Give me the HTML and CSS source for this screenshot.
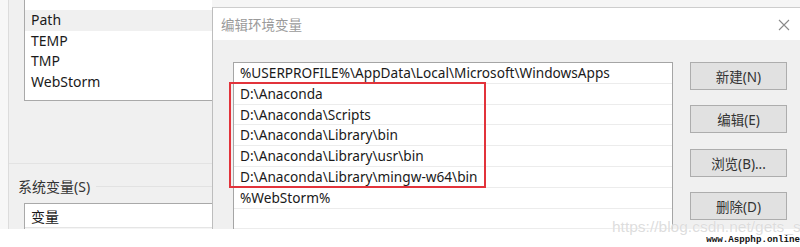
FILE: index.html
```html
<!DOCTYPE html>
<html lang="zh-CN">
<head>
    <meta charset="UTF-8">
    <title>编辑环境变量</title>
    <link rel="stylesheet" href="styles.css">
</head>
<body>
    <div class="screen">
        <div class="main">
            <aside class="env-panel">
                <div class="env-inner">
                    <ul class="var-list user-vars">
                        <li class="selected">Path</li>
                        <li>TEMP</li>
                        <li>TMP</li>
                        <li>WebStorm</li>
                    </ul>
                    <div class="group-sep"></div>
                    <div class="group-title"><span>系统变量(S)</span><i class="group-line"></i></div>
                    <div class="var-list sys-vars">
                        <div class="list-head">变量</div>
                        <div class="list-row"></div>
                    </div>
                </div>
            </aside>

            <section class="dialog-area">
                <div class="dialog">
                    <div class="dialog-title">
                        <span>编辑环境变量</span>
                        <svg class="close" width="12" height="12" viewBox="0 0 12 12">
                            <path d="M1 1 L11 11 M11 1 L1 11" stroke="#8a8a8a" stroke-width="1.1" fill="none"/>
                        </svg>
                    </div>
                    <div class="dialog-body">
                        <div class="path-list">
                            <div class="path-row">%USERPROFILE%\AppData\Local\Microsoft\WindowsApps</div>
                            <div class="path-row">D:\Anaconda</div>
                            <div class="path-row">D:\Anaconda\Scripts</div>
                            <div class="path-row">D:\Anaconda\Library\bin</div>
                            <div class="path-row">D:\Anaconda\Library\usr\bin</div>
                            <div class="path-row">D:\Anaconda\Library\mingw-w64\bin</div>
                            <div class="path-row">%WebStorm%</div>
                            <div class="path-row"></div>
                            <div class="path-row"></div>
                            <!-- red annotation box around the Anaconda entries -->
                            <div class="mark-box"></div>
                        </div>
                        <div class="buttons">
                            <button class="btn">新建(N)</button>
                            <button class="btn">编辑(E)</button>
                            <button class="btn">浏览(B)...</button>
                            <button class="btn">删除(D)</button>
                        </div>
                    </div>
                </div>
            </section>
        </div>
        <div class="footer">
            <span class="site-mark">www.Aspphp.online</span>
        </div>
        <div class="watermark">https://blog.csdn.net/gets_s</div>
    </div>
</body>
</html>
```

FILE: styles.css
```css
body {
    margin: 0;
    font-family: 'Noto Sans', 'Noto Sans CJK SC', sans-serif;
    font-size: 14px;
    color: #1a1a1a;
    background: #fff;
}
.screen {
    position: relative;
    width: 800px;
    height: 247px;
    overflow: hidden;
}
.main {
    display: flex;
    height: 229px;
    overflow: hidden;
}

/* left: environment variables window (behind the dialog) */
.env-panel {
    width: 212px;
    flex: none;
    display: flex;
    background: #f7f7f7;
    overflow: hidden;
}
.env-inner {
    margin-left: 8px;
    flex: 1;
    border-left: 1px solid #dcdcdc;
    background: #f0f0f0;
    display: flex;
    flex-direction: column;
}
.var-list {
    list-style: none;
    margin: 0 0 0 15px;
    padding: 0;
    width: 200px;
    background: #fff;
    border: 1px solid #a9a9a9;
    border-right: none;
}
.user-vars {
    border-top: none;
    padding: 10px 0 8px;
}
.user-vars li {
    height: 20.5px;
    line-height: 20.5px;
    padding-left: 6px;
}
.user-vars li.selected {
    background: #f0f0f0;
}
.group-sep {
    margin-top: 62px;
    height: 1px;
    background: #fbfbfb;
    border-top: 1px solid #e3e3e3;
}
.group-title {
    display: flex;
    align-items: center;
    margin: 13px 0 0 9px;
    height: 18px;
    color: #333;
}
.group-line {
    flex: 1;
    height: 1px;
    margin-left: 6px;
    background: #e2e2e2;
}
.sys-vars {
    margin-top: 8px;
    flex: 1;
    border-bottom: none;
}
.list-head {
    height: 23px;
    line-height: 25px;
    padding-left: 6px;
    border-bottom: 1px solid #e5e5e5;
}
.list-row {
    height: 10px;
    background: #f5f5f5;
}

/* right: edit dialog */
.dialog-area {
    flex: 1;
    padding-top: 7px;
    background: #f5f5f5;
    display: flex;
}
.dialog {
    flex: 1;
    display: flex;
    flex-direction: column;
    border-top: 1px solid #cdcdcd;
    border-left: 1px solid #bdbdbd;
    background: #f0f0f0;
}
.dialog-title {
    flex: none;
    height: 32px;
    display: flex;
    align-items: center;
    justify-content: space-between;
    padding: 0 10px 0 8px;
    background: #fff;
    color: #9a9a9a;
    font-size: 13.5px;
}
.close {
    margin-top: 1px;
}
.dialog-body {
    flex: none;
    display: flex;
    align-items: flex-start;
    padding: 22px 0 0 20px;
}
.path-list {
    position: relative;
    width: 438px;
    height: 200px;
    background: #fff;
    border: 1px solid #a5a5a5;
    border-bottom: none;
    font-size: 13.65px;
}
.path-row {
    box-sizing: border-box;
    height: 20.8px;
    line-height: 20px;
    padding-left: 6px;
    border-bottom: 1px solid #ececec;
    white-space: nowrap;
}
.mark-box {
    position: absolute;
    left: -5px;
    top: 19px;
    width: 253px;
    height: 102px;
    border: 2px solid #e2333b;
}
.buttons {
    display: flex;
    flex-direction: column;
    gap: 15.3px;
    margin-left: 17px;
}
.btn {
    width: 97px;
    height: 28px;
    padding: 0;
    background: #e1e1e1;
    border: 1px solid #adadad;
    font-family: 'Noto Sans', 'Noto Sans CJK SC', sans-serif;
    font-size: 13.5px;
    color: #333;
}

.footer {
    height: 18px;
    background: #fff;
    display: flex;
    justify-content: flex-end;
    align-items: center;
}
.site-mark {
    font-family: 'Liberation Mono', monospace;
    font-size: 9.2px;
    font-weight: bold;
    color: #111;
    margin-top: 3px;
}
.watermark {
    position: absolute;
    left: 612px;
    top: 219px;
    line-height: 16px;
    font-family: 'Liberation Sans', Arial, sans-serif;
    font-size: 15.5px;
    color: rgba(215, 215, 215, 0.85);
    text-shadow: 0 0 1px rgba(255, 255, 255, 0.9);
}
```
